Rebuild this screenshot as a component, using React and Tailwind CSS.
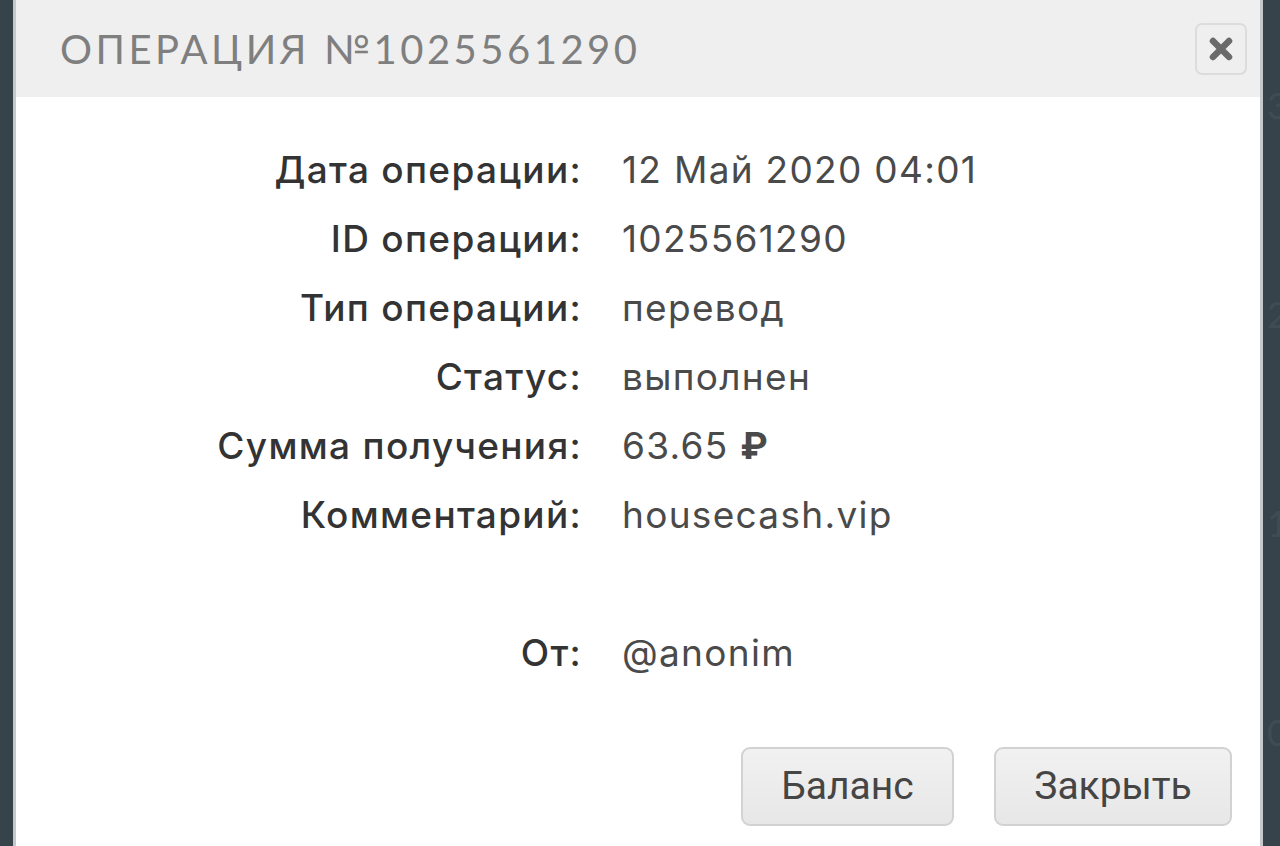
export default function App() {
  const rows = [
    ['Дата операции:', '12 Май 2020 04:01'],
    ['ID операции:', '1025561290'],
    ['Тип операции:', 'перевод'],
    ['Статус:', 'выполнен'],
    ['Сумма получения:', <>63.65 <span className="font-bold">₽</span></>],
    ['Комментарий:', 'housecash.vip'],
    ['', ''],
    ['От:', '@anonim'],
  ];

  return (
    <div className="relative flex h-[846px] w-[1280px] overflow-hidden bg-[#37434b] pl-[13px]">
      <div className="flex w-[1250px] shrink-0 flex-col border-x-[3px] border-[#c5c9cc] bg-white">
        <div className="flex h-[97px] items-center justify-between bg-[#efefef] pl-[44px] pr-[13px]">
          <h1
            className="text-[40px] tracking-[3.5px] text-[#7f7f7f]"
            style={{ fontFamily: 'Lato, "Noto Sans", sans-serif' }}
          >
            ОПЕРАЦИЯ №1025561290
          </h1>
          <button className="flex h-[52px] w-[52px] items-center justify-center rounded-[7px] border-2 border-[#dcdcdc] bg-[#efefef]">
            <svg width="28" height="28" viewBox="0 0 28 28">
              <path d="M6 6 L22 22 M22 6 L6 22" stroke="#6a6a6a" strokeWidth="6.5" strokeLinecap="round" />
            </svg>
          </button>
        </div>

        <div
          className="grid grid-cols-[566px_1fr] gap-x-10 pt-[38px] text-[37px] leading-[69px] tracking-[1.3px]"
          style={{ fontFamily: 'Inter, "Noto Sans", sans-serif' }}
        >
          {rows.map(([label, value], i) => (
            <div key={i} className="contents">
              <div className="h-[69px] text-right font-medium text-[#333]">{label}</div>
              <div className="h-[69px] text-[#4a4a4a]">{value}</div>
            </div>
          ))}
        </div>

        <div
          className="mt-[60px] flex justify-end gap-10 pr-[28px] text-[39px] text-[#454545]"
          style={{ fontFamily: 'Roboto, "Noto Sans", sans-serif' }}
        >
          <button className="h-[79px] w-[213px] rounded-[9px] border-2 border-[#d2d2d2] bg-gradient-to-b from-[#f1f1f1] to-[#e7e7e7]">
            Баланс
          </button>
          <button className="h-[79px] w-[238px] rounded-[9px] border-2 border-[#d2d2d2] bg-gradient-to-b from-[#f1f1f1] to-[#e7e7e7]">
            Закрыть
          </button>
        </div>
      </div>

      <div
        className="flex flex-1 flex-col gap-[155px] pl-[4px] pt-[78px] text-[36px] text-[#404c54]"
        style={{ fontFamily: 'Lato, sans-serif' }}
      >
        <span>3</span>
        <span>2</span>
        <span>1</span>
        <span>0</span>
      </div>
    </div>
  );
}
